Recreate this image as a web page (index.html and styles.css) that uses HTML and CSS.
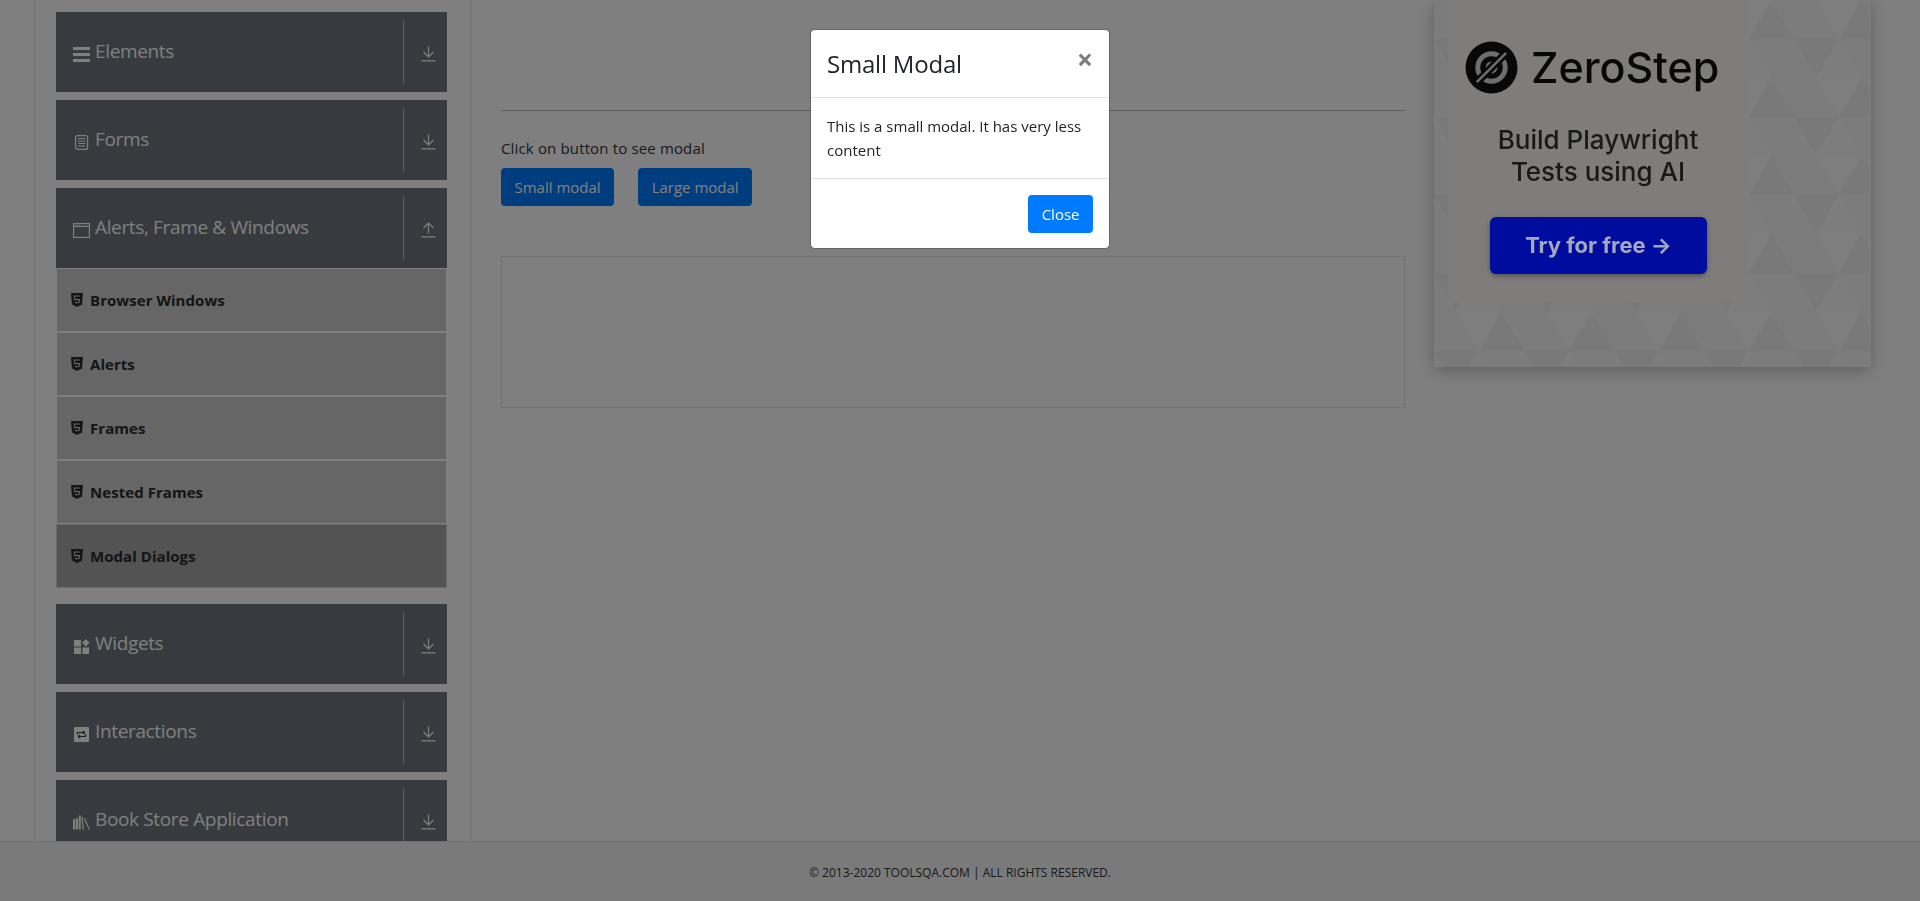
FILE: index.html
```html
<!DOCTYPE html>
<html lang="en">
<head>
    <meta charset="UTF-8">
    <title>Modal Dialogs</title>
    <link rel="stylesheet" href="styles.css">
</head>
<body>
    <svg class="icon-defs" width="0" height="0">
        <defs>
            <symbol id="i-down" viewBox="0 0 15 16">
                <path d="M7.5 0.5V11M2.5 6l5 5 5-5M0.5 14.8h14" fill="none" stroke="currentColor" stroke-width="1.2"/>
            </symbol>
            <symbol id="i-up" viewBox="0 0 15 16">
                <path d="M7.5 11.5V1M2.5 6l5-5 5 5M0.5 14.8h14" fill="none" stroke="currentColor" stroke-width="1.2"/>
            </symbol>
            <symbol id="i-html5" viewBox="0 0 12 14">
                <path d="M0 0h12l-1 11.6L6 14l-5-2.4z" fill="currentColor"/>
                <path d="M8.8 3H3.4l.3 3.6h4.7l-.3 2.7L6 10l-2.1-.7" fill="none" stroke="#ccc" stroke-width="1.1"/>
            </symbol>
        </defs>
    </svg>

    <div class="page">
        <aside class="sidebar">
            <div class="group">
                <span class="group-title">
                    <svg class="group-icon" viewBox="0 0 17 15"><path d="M0 0h17v3H0zM0 6h17v3H0zM0 12h17v3H0z" fill="currentColor"/></svg>
                    Elements
                </span>
                <span class="group-arrow"><svg><use href="#i-down"/></svg></span>
            </div>
            <div class="group">
                <span class="group-title">
                    <svg class="group-icon" viewBox="0 0 17 15"><rect x="2.6" y="0.6" width="12" height="13.8" rx="2" fill="none" stroke="currentColor" stroke-width="1.2"/><path d="M5 3.5h7.4M5 6h7.4M5 8.5h7.4M5 11h7.4" stroke="currentColor" stroke-width="1.1"/></svg>
                    Forms
                </span>
                <span class="group-arrow"><svg><use href="#i-down"/></svg></span>
            </div>
            <div class="group">
                <span class="group-title">
                    <svg class="group-icon" viewBox="0 0 17 15"><rect x="0.6" y="0.6" width="15.8" height="13.8" fill="none" stroke="currentColor" stroke-width="1.2"/><path d="M0.6 3.4h15.8" stroke="currentColor" stroke-width="1.2"/><path d="M2 2h1M4 2h1M6 2h1" stroke="currentColor"/></svg>
                    Alerts, Frame &amp; Windows
                </span>
                <span class="group-arrow"><svg><use href="#i-up"/></svg></span>
            </div>
            <ul class="sub-list">
                <li class="sub-item"><svg class="sub-icon"><use href="#i-html5"/></svg>Browser Windows</li>
                <li class="sub-item"><svg class="sub-icon"><use href="#i-html5"/></svg>Alerts</li>
                <li class="sub-item"><svg class="sub-icon"><use href="#i-html5"/></svg>Frames</li>
                <li class="sub-item"><svg class="sub-icon"><use href="#i-html5"/></svg>Nested Frames</li>
                <li class="sub-item active"><svg class="sub-icon"><use href="#i-html5"/></svg>Modal Dialogs</li>
            </ul>
            <div class="group">
                <span class="group-title">
                    <svg class="group-icon" viewBox="0 0 17 15"><path d="M1 1h7v6.500H1zM1 8.500h7V15H1zM9.500 8.500H16V15H9.500z" fill="currentColor"/><path d="M12.800 0l3.700 3.800-3.700 3.700-3.700-3.700z" fill="currentColor"/></svg>
                    Widgets
                </span>
                <span class="group-arrow"><svg><use href="#i-down"/></svg></span>
            </div>
            <div class="group">
                <span class="group-title">
                    <svg class="group-icon" viewBox="0 0 17 15"><rect x="1" y="0" width="15" height="15" rx="1" fill="currentColor"/><path d="M4.500 8V5.500h7M9.800 3.800l1.800 1.700-1.800 1.700M12.500 7v2.500h-7M7.200 11.200 5.400 9.500l1.800-1.700" fill="none" stroke="#373a3f" stroke-width="1.100"/></svg>
                    Interactions
                </span>
                <span class="group-arrow"><svg><use href="#i-down"/></svg></span>
            </div>
            <div class="group">
                <span class="group-title">
                    <svg class="group-icon" viewBox="0 0 18 15"><path d="M0 4h2.500v11H0zM3.200 3h2.300v12H3.200zM6.200 0h2v15h-2z" fill="currentColor"/><path d="M9.500 1.500 11 15M12 3l5.500 12" fill="none" stroke="currentColor" stroke-width="1.300"/></svg>
                    Book Store Application
                </span>
                <span class="group-arrow"><svg><use href="#i-down"/></svg></span>
            </div>
        </aside>

        <main class="content">
            <hr class="rule">
            <p class="hint">Click on button to see modal</p>
            <div class="btn-row">
                <button class="btn">Small modal</button>
                <button class="btn">Large modal</button>
            </div>
            <div class="result-box"></div>
        </main>

        <aside class="ad">
            <svg class="ad-pattern" width="100%" height="100%">
                <defs>
                    <pattern id="tri" width="90" height="78" patternUnits="userSpaceOnUse">
                        <path d="M0 39 22.500 0 45 39z" fill="#f8f8f8"/>
                        <path d="M22.500 0H67.500L45 39z" fill="#fcfcfc"/>
                        <path d="M45 39 67.500 0 90 39z" fill="#f2f2f2"/>
                        <path d="M0 39H45L22.500 78z" fill="#f3f3f3"/>
                        <path d="M22.500 78 45 39 67.500 78z" fill="#fbfbfb"/>
                        <path d="M45 39H90L67.500 78z" fill="#f9f9f9"/>
                    </pattern>
                </defs>
                <rect width="100%" height="100%" fill="url(#tri)"/>
            </svg>
            <div class="ad-panel">
                <div class="ad-logo">
                    <svg class="ad-mark" viewBox="0 0 54 54">
                        <circle cx="27" cy="27" r="26.500" fill="#111"/>
                        <circle cx="27" cy="27" r="14" fill="none" stroke="#ddd" stroke-width="5"/>
                        <circle cx="27" cy="27" r="6" fill="#ddd"/>
                        <path d="M11 43 43 11" stroke="#111" stroke-width="8"/>
                        <path d="M12 42 42 12" stroke="#ddd" stroke-width="2.500"/>
                    </svg>
                    <span class="ad-name">ZeroStep</span>
                </div>
                <p class="ad-tagline">Build Playwright<br>Tests using AI</p>
                <div class="ad-cta">Try for free →</div>
            </div>
        </aside>
    </div>

    <footer class="footer">© 2013-2020 TOOLSQA.COM | ALL RIGHTS RESERVED.</footer>

    <div class="backdrop"></div>

    <div class="modal">
        <div class="modal-box">
            <div class="modal-head">
                <h4 class="modal-title">Small Modal</h4>
                <span class="modal-close">×</span>
            </div>
            <div class="modal-body">This is a small modal. It has very less content</div>
            <div class="modal-foot">
                <button class="btn">Close</button>
            </div>
        </div>
    </div>
</body>
</html>
```

FILE: styles.css
```css
* {
  box-sizing: border-box;
}

html,
body {
  margin: 0;
  height: 901px;
  overflow: hidden;
}

body {
  font-family: "Open Sans", "Liberation Sans", sans-serif;
  font-size: 16px;
  color: #212529;
  background-color: #fff;
}

.icon-defs {
  display: block;
  height: 0;
}

.page {
  display: flex;
  height: 901px;
  padding-left: 34px;
}

/* left menu */
.sidebar {
  flex: 0 0 437px;
  padding: 12px 23px 0 21px;
  border-left: 1px solid #dee2e6;
  border-right: 1px solid #dee2e6;
}

.group {
  display: flex;
  align-items: stretch;
  justify-content: space-between;
  height: 80px;
  margin-bottom: 8px;
  padding: 8px 0;
  background-color: #6e747e;
  color: #fff;
}

.group-title {
  display: flex;
  align-items: center;
  gap: 5px;
  padding: 0 0 2px 17px;
  font-size: 19px;
  letter-spacing: -0.35px;
}

.group-icon {
  width: 17px;
  height: 15px;
  margin-top: 6px;
  flex: none;
}

.group-arrow {
  display: flex;
  align-items: center;
  justify-content: center;
  width: 44px;
  padding: 4px 0 0 5px;
  border-left: 1px solid rgba(255, 255, 255, 0.55);
}

.group-arrow svg {
  width: 15px;
  height: 16px;
}

.sub-list {
  list-style: none;
  margin: 0 0 16px;
  padding: 0;
}

.group:has(+ .sub-list) {
  margin-bottom: 0;
}

.sub-item {
  display: flex;
  align-items: center;
  gap: 7px;
  height: 64px;
  padding-left: 14px;
  border: 1px solid #fff;
  background-color: #ccc;
  color: #2a2a2a;
  font-size: 15px;
  font-weight: 700;
  letter-spacing: 0.05px;
}

.sub-item.active {
  background-color: #a6a6a6;
  border-color: #d2d2d2;
}

.sub-icon {
  width: 12px;
  height: 14px;
  margin-top: -1px;
  flex: none;
}

/* middle column */
.content {
  flex: 0 0 963px;
  padding: 110px 29px 0 30px;
}

.rule {
  height: 0;
  margin: 0 0 27px;
  border: 0;
  border-top: 1px solid #b9b9b9;
}

.hint {
  margin: 0 0 9px;
  font-size: 15px;
  line-height: 21px;
  letter-spacing: 0.15px;
  color: #333;
}

.btn-row {
  display: flex;
  gap: 24px;
  margin-bottom: 50px;
}

.btn {
  height: 38px;
  padding: 0 13.5px;
  border: 0;
  border-radius: 4px;
  background-color: #007bff;
  color: #fff;
  font-family: inherit;
  font-size: 15px;
}

.result-box {
  height: 152px;
  border: 1px solid #dee2e6;
}

/* right banner */
.ad {
  position: relative;
  flex: 0 0 437px;
  height: 367px;
  background-color: #f9f9f9;
  box-shadow: 0 4px 14px rgba(0, 0, 0, 0.25);
}

.ad-pattern {
  position: absolute;
  top: 0;
  left: 0;
  filter: blur(0.6px);
}

.ad-panel {
  position: relative;
  width: 300px;
  height: 302px;
  margin-left: 14px;
  padding-top: 41px;
  background-color: #fcfbf6;
  text-align: center;
}

.ad-logo {
  display: flex;
  align-items: center;
  gap: 13px;
  padding-left: 17px;
  filter: blur(0.4px);
}

.ad-mark {
  width: 53px;
  height: 53px;
  flex: none;
}

.ad-name {
  font-family: Inter, sans-serif;
  font-size: 43px;
  font-weight: 500;
  line-height: 53px;
  color: #111;
}

.ad-tagline {
  margin: 30px 0 0;
  font-family: Inter, sans-serif;
  font-size: 26px;
  font-weight: 500;
  line-height: 32px;
  color: #333;
  filter: blur(0.4px);
}

/* sits above the backdrop, the banner button stays this bright in the shot */
.ad-cta {
  position: relative;
  z-index: 1;
  width: 217px;
  height: 57px;
  margin: 29px auto 0 42px;
  border-radius: 6px;
  background-color: #000c9e;
  box-shadow: 0 2px 5px rgba(0, 0, 0, 0.35);
  color: #a4a8bc;
  font-family: Inter, sans-serif;
  font-size: 22px;
  font-weight: 700;
  line-height: 57px;
  filter: blur(0.4px);
}

/* page footer */
.footer {
  position: fixed;
  left: 0;
  right: 0;
  bottom: 0;
  height: 60px;
  border-top: 1px solid #dee2e6;
  background-color: #f5f5f5;
  font-size: 12px;
  line-height: 62px;
  text-align: center;
  color: #333;
}

/* modal */
.backdrop {
  position: fixed;
  top: 0;
  left: 0;
  right: 0;
  bottom: 0;
  background-color: rgba(0, 0, 0, 0.5);
}

.modal {
  position: fixed;
  z-index: 2;
  top: 29px;
  left: 810px;
  width: 300px;
}

.modal-box {
  border: 1px solid rgba(0, 0, 0, 0.2);
  border-radius: 5px;
  background-color: #fff;
  background-clip: padding-box;
}

.modal-head {
  display: flex;
  align-items: flex-start;
  justify-content: space-between;
  height: 68px;
  padding: 16px;
  border-bottom: 1px solid #dee2e6;
}

.modal-title {
  margin: 0;
  font-size: 24px;
  font-weight: 500;
  line-height: 36px;
  letter-spacing: -0.2px;
}

.modal-close {
  margin: -5px 0 0 0;
  font-size: 28px;
  font-weight: 700;
  line-height: 36px;
  color: #7b7b7b;
}

.modal-body {
  height: 80px;
  padding: 16px;
  font-size: 15px;
  line-height: 24px;
}

.modal-foot {
  display: flex;
  justify-content: flex-end;
  height: 70px;
  padding: 16px;
  border-top: 1px solid #dee2e6;
}
```
